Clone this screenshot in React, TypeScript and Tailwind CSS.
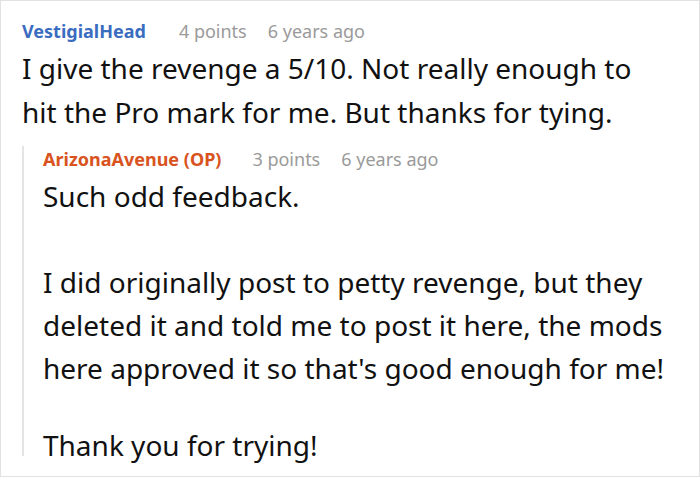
import React from "react";

export default function App() {
  const font = { fontFamily: '"Noto Sans", "Open Sans", sans-serif' };
  return (
    <div className="w-[700px] h-[477px] bg-white border border-[#e2e2e2] overflow-hidden text-[#111]" style={font}>
      <div className="pl-[21px] pt-[17px]">
        <div className="flex items-baseline h-[26px] leading-[26px]">
          <span className="font-bold text-[18px] text-[#3a6cc0]">VestigialHead</span>
          <span className="ml-[33px] text-[18px] text-[#9a9a9a]">4 points</span>
          <span className="ml-[21px] text-[18px] text-[#9a9a9a]">6 years ago</span>
        </div>
        <p className="text-[28px] leading-[44px] mt-[2px]">
          I give the revenge a 5/10. Not really enough to
          <br />
          hit the Pro mark for me. But thanks for tying.
        </p>
        <div className="mt-[23px] border-l-2 border-[#e4e4e4] pl-[19px]">
          <div className="flex items-baseline h-[26px] leading-[26px] -mt-[11px]">
            <span className="font-bold text-[18px] text-[#d9531e]">ArizonaAvenue (OP)</span>
            <span className="ml-[31px] text-[18px] text-[#9a9a9a]">3 points</span>
            <span className="ml-[21px] text-[18px] text-[#9a9a9a]">6 years ago</span>
          </div>
          <div className="text-[28px] leading-[43px] mt-[3px]">
            <p>Such odd feedback.</p>
            <p>&nbsp;</p>
            <p>I did originally post to petty revenge, but they</p>
            <p>deleted it and told me to post it here, the mods</p>
            <p>here approved it so that's good enough for me!</p>
            <p className="mt-[34px] h-[32px]">Thank you for trying!</p>
          </div>
        </div>
      </div>
    </div>
  );
}
